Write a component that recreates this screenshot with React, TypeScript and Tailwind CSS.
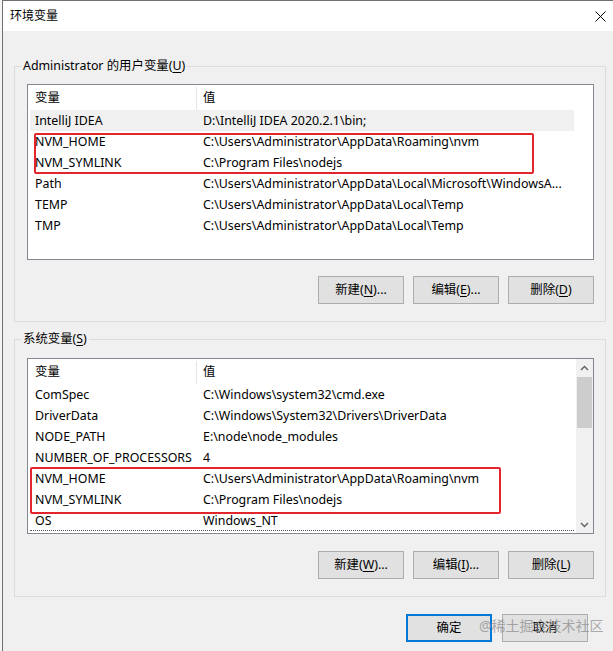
import React from 'react';

type Row = { name: string; value: string; selected?: boolean };

const userVars: Row[] = [
  { name: 'IntelliJ IDEA', value: 'D:\\IntelliJ IDEA 2020.2.1\\bin;', selected: true },
  { name: 'NVM_HOME', value: 'C:\\Users\\Administrator\\AppData\\Roaming\\nvm' },
  { name: 'NVM_SYMLINK', value: 'C:\\Program Files\\nodejs' },
  { name: 'Path', value: 'C:\\Users\\Administrator\\AppData\\Local\\Microsoft\\WindowsA...' },
  { name: 'TEMP', value: 'C:\\Users\\Administrator\\AppData\\Local\\Temp' },
  { name: 'TMP', value: 'C:\\Users\\Administrator\\AppData\\Local\\Temp' },
];

const sysVars: Row[] = [
  { name: 'ComSpec', value: 'C:\\Windows\\system32\\cmd.exe' },
  { name: 'DriverData', value: 'C:\\Windows\\System32\\Drivers\\DriverData' },
  { name: 'NODE_PATH', value: 'E:\\node\\node_modules' },
  { name: 'NUMBER_OF_PROCESSORS', value: '4' },
  { name: 'NVM_HOME', value: 'C:\\Users\\Administrator\\AppData\\Roaming\\nvm' },
  { name: 'NVM_SYMLINK', value: 'C:\\Program Files\\nodejs' },
  { name: 'OS', value: 'Windows_NT' },
];

const Mn = ({ c }: { c: string }) => <span className="underline underline-offset-[2px]">{c}</span>;

const Btn = ({ children, primary }: { children: React.ReactNode; primary?: boolean }) => (
  <button
    className={
      'flex h-[28px] w-[86px] items-center justify-center bg-[#e1e1e1] text-[12.4px] text-black ' +
      (primary ? 'border-2 border-[#0078d7]' : 'border border-[#adadad]')
    }
  >
    {children}
  </button>
);

const Header = () => (
  <div className="flex h-[25px] w-[546px] items-center bg-white pt-[2px]">
    <div className="w-[168px] pl-[7px]">变量</div>
    <div className="h-full w-px bg-[#e5e5e5]" />
    <div className="pl-[6px]">值</div>
  </div>
);

const Rows = ({ rows, focusLast }: { rows: Row[]; focusLast?: boolean }) => (
  <div className="flex flex-col">
    {rows.map((r, i) => (
      <div
        key={r.name + i}
        className={
          'ml-[2px] flex h-[21px] w-[544px] items-center whitespace-nowrap pt-[2px] ' +
          (r.selected ? 'bg-[#f0f0f0] ' : '') +
          (focusLast && i === rows.length - 1 ? 'border-b border-dotted border-[#555]' : '')
        }
      >
        <div className="w-[167px] pl-[5px]">{r.name}</div>
        <div className="pl-[6px]">{r.value}</div>
      </div>
    ))}
  </div>
);

const Chevron = ({ up }: { up?: boolean }) => (
  <svg width="9" height="6" viewBox="0 0 9 6" className="block">
    <path d={up ? 'M1 5 L4.5 1.5 L8 5' : 'M1 1 L4.5 4.5 L8 1'} fill="none" stroke="#606060" strokeWidth="1.4" />
  </svg>
);

export default function App() {
  return (
    <div
      className="relative flex h-[651px] w-[613px] overflow-hidden bg-white text-[12.4px] text-black"
      style={{ fontFamily: '"Noto Sans", "Noto Sans CJK SC", sans-serif' }}
    >
      <div className="w-[2px] bg-[#f4f4f4]" />
      <div className="flex flex-1 flex-col border-l border-t border-[#707070]">
        {/* title bar */}
        <div className="flex h-[30px] items-center justify-between bg-white pl-[7px] pr-[7px]">
          <span className="text-[12px]">环境变量</span>
          <svg width="11" height="11" viewBox="0 0 11 11">
            <path d="M0.5 0.5 L10.5 10.5 M10.5 0.5 L0.5 10.5" stroke="#000" strokeWidth="1" />
          </svg>
        </div>

        <div className="flex flex-1 flex-col bg-[#f0f0f0] pl-[11px] pr-[7px] pt-[27px]">
          {/* user vars */}
          <fieldset className="border border-[#dcdcdc] px-[6px] pb-[17px]">
            <legend className="px-[2px] leading-[16px]">
              Administrator 的用户变量(<Mn c="U" />)
            </legend>
            <div className="pl-[6px] pr-[5px]">
              <div className="relative mt-[10px] h-[176px] border border-[#828790] bg-white">
                <Header />
                <Rows rows={userVars} />
                <div className="absolute left-[6px] top-[48px] h-[41px] w-[500px] rounded-[2px] border-2 border-[#e3262b]" />
              </div>
              <div className="mt-[16px] flex justify-end gap-[9px]">
                <Btn>新建(<Mn c="N" />)...</Btn>
                <Btn>编辑(<Mn c="E" />)...</Btn>
                <Btn>删除(<Mn c="D" />)</Btn>
              </div>
            </div>
          </fieldset>

          {/* system vars */}
          <fieldset className="mt-[9px] border border-[#dcdcdc] px-[6px] pb-[17px]">
            <legend className="px-[2px] leading-[16px]">
              系统变量(<Mn c="S" />)
            </legend>
            <div className="pl-[6px] pr-[5px]">
              <div className="relative mt-[11px] flex h-[176px] border border-[#828790] bg-white">
                <div className="flex-1">
                  <Header />
                  <Rows rows={sysVars} focusLast />
                </div>
                <div className="flex w-[17px] flex-col items-center bg-[#f0f0f0]">
                  <div className="flex h-[17px] items-center justify-center">
                    <Chevron up />
                  </div>
                  <div className="mt-px h-[51px] w-[15px] bg-[#cdcdcd]" />
                  <div className="flex-1" />
                  <div className="flex h-[17px] items-center justify-center">
                    <Chevron />
                  </div>
                </div>
                <div className="absolute left-[2px] top-[108px] h-[47px] w-[471px] rounded-[2px] border-2 border-[#e3262b]" />
              </div>
              <div className="mt-[17px] flex justify-end gap-[9px]">
                <Btn>新建(<Mn c="W" />)...</Btn>
                <Btn>编辑(<Mn c="I" />)...</Btn>
                <Btn>删除(<Mn c="L" />)</Btn>
              </div>
            </div>
          </fieldset>

          {/* dialog buttons */}
          <div className="mt-[17px] flex justify-end gap-[10px] pr-[18px]">
            <Btn primary>确定</Btn>
            <Btn>取消</Btn>
          </div>
        </div>
      </div>

      <div className="pointer-events-none absolute left-[479px] top-[615px] text-[14px] text-[#8a8a8a] opacity-70">
        @稀土掘金技术社区
      </div>
    </div>
  );
}
